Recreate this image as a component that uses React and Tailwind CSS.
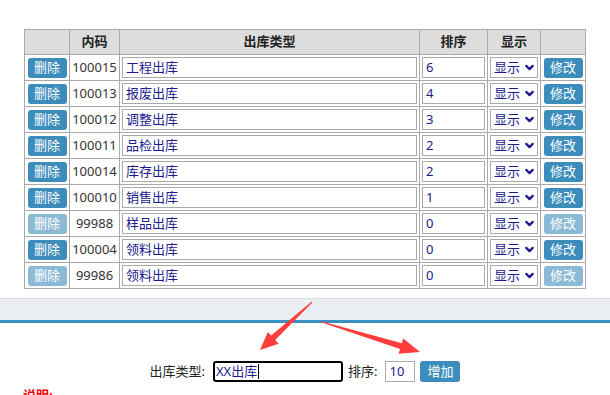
import React from 'react';
import { ChevronDown } from 'lucide-react';

const rows = [
  { id: '100015', name: '工程出库', sort: '6', locked: false },
  { id: '100013', name: '报废出库', sort: '4', locked: false },
  { id: '100012', name: '调整出库', sort: '3', locked: false },
  { id: '100011', name: '品检出库', sort: '2', locked: false },
  { id: '100014', name: '库存出库', sort: '2', locked: false },
  { id: '100010', name: '销售出库', sort: '1', locked: false },
  { id: '99988', name: '样品出库', sort: '0', locked: true },
  { id: '100004', name: '领料出库', sort: '0', locked: false },
  { id: '99986', name: '领料出库', sort: '0', locked: true },
];

const Btn = ({ children, locked }) => (
  <div
    className={`mx-auto flex h-[20px] w-[39px] items-center justify-center rounded-[3px] text-[13px] text-white ${
      locked ? 'bg-[#8bbad6]' : 'bg-[#3c8dbc]'
    }`}
  >
    {children}
  </div>
);

const Arrows = () => (
  <svg className="pointer-events-none absolute left-0 top-0" width="610" height="395">
    <polygon
      fill="#ff3d3d"
      points="312.3,302.4 275.2,340 278.6,343.7 260,350 267.8,331.9 271.2,335.6 311.7,301.6"
    />
    <polygon
      fill="#ff3d3d"
      points="322.2,321.4 401.8,343.2 403.2,338.4 420,352 398.6,353.7 400,349 321.8,322.6"
    />
  </svg>
);

export default function App() {
  const cell = 'border border-[#aaa] p-[2px]';
  return (
    <div
      className="relative h-[395px] w-[610px] overflow-hidden bg-white text-[13px] text-[#333]"
      style={{ fontFamily: '"Noto Sans", "Noto Sans CJK SC", sans-serif' }}
    >
      <div className="pl-[24px] pt-[29px]">
        <table className="w-[561px] table-fixed border-collapse">
          <colgroup>
            <col className="w-[45px]" />
            <col className="w-[50px]" />
            <col className="w-[300px]" />
            <col className="w-[68px]" />
            <col className="w-[53px]" />
            <col className="w-[45px]" />
          </colgroup>
          <thead>
            <tr className="h-[25px] bg-[#dddddd] font-bold text-[#222]">
              <th className={cell}></th>
              <th className={cell}>内码</th>
              <th className={cell}>出库类型</th>
              <th className={cell}>排序</th>
              <th className={cell}>显示</th>
              <th className={cell}></th>
            </tr>
          </thead>
          <tbody>
            {rows.map((r, i) => (
              <tr key={i} className="h-[26px]">
                <td className={cell}>
                  <Btn locked={r.locked}>删除</Btn>
                </td>
                <td className={`${cell} text-center`}>{r.id}</td>
                <td className={cell}>
                  <div className="flex h-[21px] items-center border border-[#aaa] px-[3px] text-[#1b1a8e]">
                    {r.name}
                  </div>
                </td>
                <td className={cell}>
                  <div className="flex h-[21px] items-center border border-[#aaa] px-[3px] text-[#1b1a8e]">
                    {r.sort}
                  </div>
                </td>
                <td className={cell}>
                  <div className="flex h-[21px] items-center gap-[3px] whitespace-nowrap border border-[#aaa] pl-[3px] text-[#1b1a8e]">
                    <span>显示</span>
                    <ChevronDown className="h-[13px] w-[13px] shrink-0" strokeWidth={4} />
                  </div>
                </td>
                <td className={cell}>
                  <Btn locked={r.locked}>修改</Btn>
                </td>
              </tr>
            ))}
          </tbody>
        </table>
      </div>

      <div className="mt-[9px] h-[22px] border-t border-[#dcdcdc] bg-[#eaedf2]"></div>
      <div className="h-[3px] bg-[#3a8fbe]"></div>

      <div className="mt-[38px] flex items-center justify-center text-[13px] text-[#222]">
        <span className="mr-[8px]">出库类型:</span>
        <div className="flex h-[21px] w-[130px] items-center rounded-[3px] border-2 border-black px-[1px] text-[#1b1a8e]">
          XX出库
          <span className="ml-[1px] h-[15px] w-px bg-black"></span>
        </div>
        <span className="ml-[5px] mr-[8px]">排序:</span>
        <div className="flex h-[21px] w-[30px] items-center border border-[#aaa] px-[3px] text-[#1b1a8e]">
          10
        </div>
        <div className="ml-[5px] flex h-[21px] w-[40px] items-center justify-center rounded-[3px] bg-[#3c8dbc] text-white">
          增加
        </div>
      </div>

      <div className="mt-[4px] pl-[23px] text-[13px] font-bold text-[#ff0000]">说明:</div>

      <Arrows />
    </div>
  );
}
